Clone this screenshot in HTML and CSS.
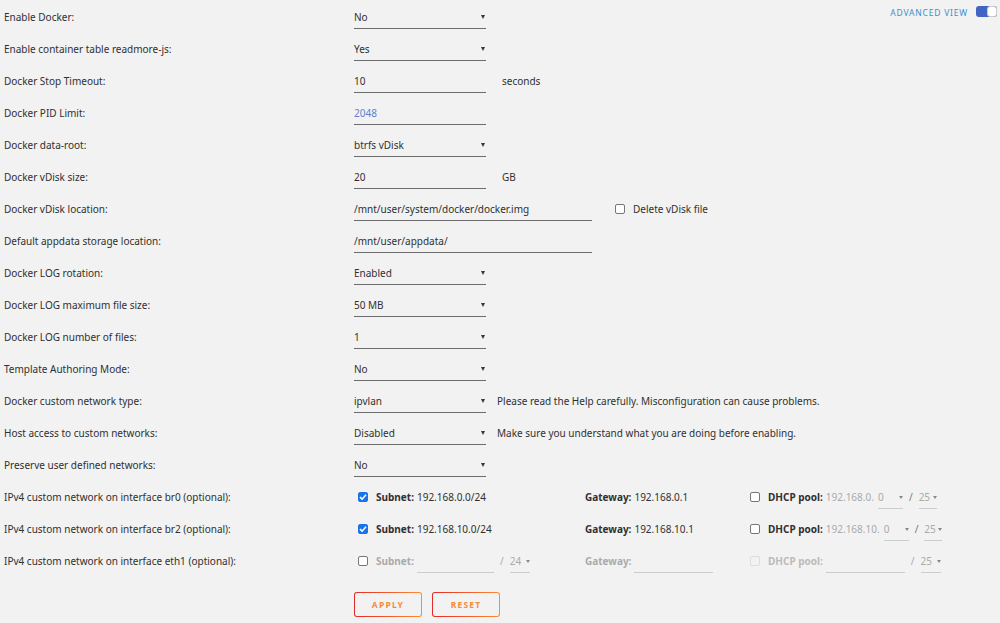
FILE: index.html
```html
<!DOCTYPE html>
<html lang="en">
<head>
  <meta charset="UTF-8" />
  <title>Docker Settings</title>
  <link rel="stylesheet" href="styles.css">
</head>
<body>
  <div class="view-bar">
    <span class="view-label">ADVANCED VIEW</span>
    <span class="switch"><span class="knob"></span></span>
  </div>

  <div class="settings">
    <div class="row"><span class="label">Enable Docker:</span>
      <div class="value"><span class="select">No</span></div></div>

    <div class="row"><span class="label">Enable container table readmore-js:</span>
      <div class="value"><span class="select">Yes</span></div></div>

    <div class="row"><span class="label">Docker Stop Timeout:</span>
      <div class="value"><span class="field">10</span><span class="unit">seconds</span></div></div>

    <div class="row"><span class="label">Docker PID Limit:</span>
      <div class="value"><span class="field placeholder">2048</span></div></div>

    <div class="row"><span class="label">Docker data-root:</span>
      <div class="value"><span class="select">btrfs vDisk</span></div></div>

    <div class="row"><span class="label">Docker vDisk size:</span>
      <div class="value"><span class="field">20</span><span class="unit">GB</span></div></div>

    <div class="row"><span class="label">Docker vDisk location:</span>
      <div class="value"><span class="field wide">/mnt/user/system/docker/docker.img</span>
        <span class="check-label"><span class="check"></span>Delete vDisk file</span></div></div>

    <div class="row"><span class="label">Default appdata storage location:</span>
      <div class="value"><span class="field wide">/mnt/user/appdata/</span></div></div>

    <div class="row"><span class="label">Docker LOG rotation:</span>
      <div class="value"><span class="select">Enabled</span></div></div>

    <div class="row"><span class="label">Docker LOG maximum file size:</span>
      <div class="value"><span class="select">50 MB</span></div></div>

    <div class="row"><span class="label">Docker LOG number of files:</span>
      <div class="value"><span class="select">1</span></div></div>

    <div class="row"><span class="label">Template Authoring Mode:</span>
      <div class="value"><span class="select">No</span></div></div>

    <div class="row"><span class="label">Docker custom network type:</span>
      <div class="value"><span class="select">ipvlan</span>
        <span class="hint">Please read the Help carefully. Misconfiguration can cause problems.</span></div></div>

    <div class="row"><span class="label">Host access to custom networks:</span>
      <div class="value"><span class="select">Disabled</span>
        <span class="hint">Make sure you understand what you are doing before enabling.</span></div></div>

    <div class="row"><span class="label">Preserve user defined networks:</span>
      <div class="value"><span class="select">No</span></div></div>

    <div class="row"><span class="label">IPv4 custom network on interface br0 (optional):</span>
      <div class="value net">
        <span class="net-subnet"><span class="check on"></span><b>Subnet:</b> 192.168.0.0/24</span>
        <span class="net-gateway"><b>Gateway:</b> 192.168.0.1</span>
        <span class="net-dhcp"><span class="check"></span><b>DHCP pool:</b>
          <span class="muted">192.168.0.</span><span class="mini-select w25">0</span><span class="slash">/</span><span class="mini-select w18">25</span></span>
      </div></div>

    <div class="row"><span class="label">IPv4 custom network on interface br2 (optional):</span>
      <div class="value net">
        <span class="net-subnet"><span class="check on"></span><b>Subnet:</b> 192.168.10.0/24</span>
        <span class="net-gateway"><b>Gateway:</b> 192.168.10.1</span>
        <span class="net-dhcp"><span class="check"></span><b>DHCP pool:</b>
          <span class="muted">192.168.10.</span><span class="mini-select w25">0</span><span class="slash">/</span><span class="mini-select w18">25</span></span>
      </div></div>

    <div class="row"><span class="label">IPv4 custom network on interface eth1 (optional):</span>
      <div class="value net off">
        <span class="net-subnet"><span class="check"></span><b>Subnet:</b><span class="blank w77"></span><span class="slash">/</span><span class="mini-select w20">24</span></span>
        <span class="net-gateway"><b>Gateway:</b><span class="blank w79"></span></span>
        <span class="net-dhcp"><span class="check faint"></span><b>DHCP pool:</b><span class="blank w79"></span><span class="slash">/</span><span class="mini-select w20">25</span></span>
      </div></div>
  </div>

  <div class="actions">
    <button class="btn">APPLY</button>
    <button class="btn">RESET</button>
  </div>
</body>
</html>
```

FILE: styles.css
```css
body {
  margin: 0;
  background: #f2f2f2;
  font-family: "Noto Sans", "Open Sans", sans-serif;
  font-size: 10px;
  color: #303030;
}

.view-bar {
  height: 0;
  display: flex;
  justify-content: flex-end;
  align-items: flex-start;
  padding-right: 3px;
}

.view-label {
  margin-top: 7px;
  font-size: 8.5px;
  letter-spacing: 0.8px;
  color: #3a8fcf;
}

.switch {
  display: flex;
  justify-content: flex-end;
  width: 21px;
  height: 11px;
  margin: 6px 0 0 8px;
  box-sizing: border-box;
  border-radius: 3px;
  background: #3f66c2;
}

.knob {
  width: 10px;
  height: 11px;
  box-sizing: border-box;
  border: 1px solid #ccc;
  border-radius: 3px;
  background: #fff;
}

.settings {
  padding-top: 1px;
}

.row {
  display: grid;
  grid-template-columns: 354px 1fr;
  align-items: center;
  height: 32px;
}

.label {
  padding-left: 4px;
}

.value {
  display: flex;
  align-items: center;
}

.field,
.select {
  display: flex;
  align-items: center;
  justify-content: space-between;
  width: 132px;
  height: 22px;
  box-sizing: border-box;
  border-bottom: 1px solid #6b6b6b;
  margin-top: 1px;
}

.field.wide {
  width: 238px;
}

.placeholder {
  color: #5f81cc;
}

.select::after {
  content: "";
  margin-right: 1px;
  border-left: 2px solid transparent;
  border-right: 2px solid transparent;
  border-top: 4px solid #333;
}

.unit {
  margin-left: 16px;
}

.hint {
  margin-left: 11px;
}

.check-label {
  display: flex;
  align-items: center;
  margin-left: 23px;
}

.check {
  display: inline-block;
  flex: none;
  width: 10px;
  height: 10px;
  box-sizing: border-box;
  border: 1px solid #777;
  border-radius: 2px;
  background: #fff;
  margin-right: 8px;
}

.check.on {
  border-color: #1a73e8;
  background: #1a73e8 url("data:image/svg+xml;utf8,<svg xmlns='http://www.w3.org/2000/svg' viewBox='0 0 10 10'><path d='M2 5.2 4.1 7.2 8 2.8' fill='none' stroke='white' stroke-width='1.6'/></svg>") center / 10px 10px no-repeat;
}

.check.faint {
  border-color: #ddd;
  background: #f2f2f2;
}

.net b {
  font-weight: 700;
  margin-right: 3px;
}

.net-subnet {
  display: flex;
  align-items: center;
  width: 227px;
  padding-left: 4px;
}

.net-gateway {
  display: flex;
  align-items: center;
  width: 165px;
}

.net-dhcp {
  display: flex;
  align-items: center;
}

.muted {
  color: #aaa;
  margin-right: 4px;
}

.off b {
  color: #aaa;
}

.off .net-dhcp b {
  color: #bbb;
}

.mini-select {
  display: flex;
  align-items: center;
  justify-content: space-between;
  height: 22px;
  box-sizing: border-box;
  border-bottom: 1px solid #ccc;
  margin-top: 1px;
  color: #aaa;
}

.mini-select::after {
  content: "";
  border-left: 2px solid transparent;
  border-right: 2px solid transparent;
  border-top: 3px solid #888;
}

.w25 { width: 25px; }
.w20 { width: 20px; }
.w18 { width: 18px; }

.blank {
  height: 22px;
  box-sizing: border-box;
  border-bottom: 1px solid #ccc;
  margin-top: 1px;
}

.w77 { width: 77px; }
.w79 { width: 79px; }

.slash {
  margin: 0 6px;
  color: #777;
}

.off .slash {
  color: #aaa;
}

.actions {
  display: flex;
  gap: 10px;
  padding: 15px 0 0 354px;
}

.btn {
  width: 68px;
  height: 25px;
  border: 1px solid transparent;
  border-radius: 3px;
  background: linear-gradient(#f2f2f2, #f2f2f2) padding-box,
              linear-gradient(90deg, #e22a2a, #ff8c2f) border-box;
  font-family: "Noto Sans", sans-serif;
  font-size: 8.5px;
  font-weight: 700;
  letter-spacing: 1.2px;
  color: #f68a3a;
  cursor: pointer;
}
```
